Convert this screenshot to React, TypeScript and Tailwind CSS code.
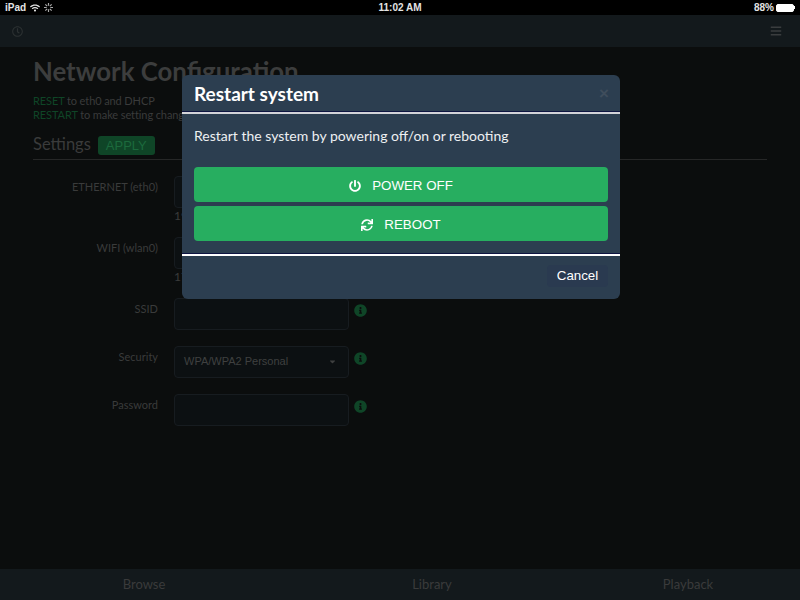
import { FaBars, FaInfoCircle, FaPowerOff, FaRegClock, FaSync, FaWifi, FaCaretDown } from 'react-icons/fa'

function FormRow({ label, caption, value }: { label: string; caption?: string; value?: string }) {
  return (
    <div className="flex items-start">
      <label className="w-[125px] pt-[3px] text-right text-[11px] leading-[16px] text-[#3a3b3b]">{label}</label>
      <div className="ml-4 w-[175px]">
        <div className="flex h-8 items-center justify-between rounded-[4px] border border-[#171c20] bg-[#0c1012] pb-[2px] pl-[9px] pr-[11px] font-['Liberation_Sans',sans-serif] text-[11px] text-[#3f4040]">
          {value}
          {value && <FaCaretDown className="text-[9px] text-[#3f4040]" />}
        </div>
        {caption && <p className="text-[12px] leading-[16px] text-[#3a3b3b]">{caption}</p>}
      </div>
      <FaInfoCircle className="ml-[5px] mt-[6px] text-[13px] text-[#0f4527]" />
    </div>
  )
}

function ActionButton({ icon, label }: { icon: React.ReactNode; label: string }) {
  return (
    <button className="flex h-[35px] w-full items-center justify-center gap-[11px] rounded-[4px] bg-[#27ae60] pt-[2px] font-['Liberation_Sans',sans-serif] text-[13.33px] text-white">
      {icon}
      {label}
    </button>
  )
}

export default function App() {
  return (
    <div className="relative flex h-[600px] w-[800px] flex-col overflow-hidden bg-[#0b0d0d] font-['Lato',sans-serif]">
      {/* Status bar */}
      <div className="flex h-[15px] items-center justify-between bg-black px-[5px] font-['Liberation_Sans',sans-serif] text-[10px] font-bold text-[#e4e4e4]">
        <div className="flex w-[200px] items-center gap-[4px]">
          <span>iPad</span>
          <FaWifi className="text-[10px]" />
          <svg width="9" height="9" viewBox="0 0 10 10" stroke="#aaa" strokeWidth="1.3">
            <path d="M5 0v3M5 7v3M0 5h3M7 5h3M1.5 1.5l2 2M6.5 6.5l2 2M8.5 1.5l-2 2M3.5 6.5l-2 2" />
          </svg>
        </div>
        <span>11:02 AM</span>
        <div className="flex w-[200px] items-center justify-end gap-[2px]">
          <span>88%</span>
          <div className="flex items-center">
            <div className="h-[8px] w-[18px] rounded-[2px] border border-white bg-white" />
            <div className="h-[3px] w-[1px] bg-white" />
          </div>
        </div>
      </div>

      {/* Navbar */}
      <div className="flex h-[32px] items-center justify-between bg-[#13191c] pl-[12px] pr-[18px]">
        <FaRegClock className="text-[11px] text-[#2c3132]" />
        <FaBars className="text-[12px] text-[#3a3d3e]" />
      </div>

      {/* Page */}
      <div className="flex-1 px-[33px] pt-[8px]">
        <h1 className="text-[25.8px] font-bold leading-[32px] text-[#3c3d3d]">Network Configuration</h1>
        <p className="mt-[7px] text-[11px] leading-[14px] tracking-[-0.1px] text-[#3a3b3b]">
          <span className="text-[#0f4527]">RESET</span> to eth0 and DHCP
          <br />
          <span className="text-[#0f4527]">RESTART</span> to make setting changes
        </p>
        <div className="mt-[10px] flex items-center gap-[7px] border-b border-[#262727] pb-[3px]">
          <span className="text-[16.5px] leading-[24px] text-[#3a3b3b]">Settings</span>
          <span className="mt-[2px] rounded-[3px] bg-[#0f4527] px-2 font-['Liberation_Sans',sans-serif] text-[13px] leading-[19px] text-[#1c6a3d]">APPLY</span>
        </div>
        <div className="mt-[16px] flex flex-col gap-4">
          <FormRow label="ETHERNET (eth0)" caption="192.168.1.10" />
          <div className="-mt-[3px]">
            <FormRow label="WIFI (wlan0)" caption="172.24.1.1" />
          </div>
          <div className="-mt-[3px]">
            <FormRow label="SSID" />
          </div>
          <FormRow label="Security" value="WPA/WPA2 Personal" />
          <FormRow label="Password" />
        </div>
      </div>

      {/* Bottom tabs */}
      <div className="flex h-[31px] items-center bg-[#13191c] text-[13px] text-[#3a3b3b]">
        <span className="w-[288px] text-center">Browse</span>
        <span className="w-[288px] text-center">Library</span>
        <span className="w-[224px] text-center">Playback</span>
      </div>

      {/* Modal */}
      <div className="absolute left-[182px] top-[75px] w-[438px] rounded-[6px] bg-[#2c3e50] text-white">
        <div className="flex h-[36px] items-center justify-between pl-3 pr-[11px]">
          <h2 className="pt-[2px] text-[19px] font-bold">Restart system</h2>
          <span className="font-['Liberation_Sans',sans-serif] text-[17px] font-bold leading-none text-[#3f4d5c]">×</span>
        </div>
        <div className="border-t border-[#0e1440] bg-[#d3d3d8] pt-[2px]" />
        <div className="px-3 pt-[12px]">
          <p className="text-[14px] leading-[20px] text-[#eef0f2]">Restart the system by powering off/on or rebooting</p>
          <div className="mt-[21px] flex flex-col gap-[4px]">
            <ActionButton icon={<FaPowerOff className="text-[12px]" />} label="POWER OFF" />
            <ActionButton icon={<FaSync className="text-[12px]" />} label="REBOOT" />
          </div>
        </div>
        <div className="mt-[12px] border-t border-[#0e1440] bg-white pt-[2px]" />
        <div className="flex justify-end px-3 pb-[12px] pt-[9px]">
          <button className="h-[22px] w-[61px] rounded-[4px] bg-[#2a3a50] font-['Liberation_Sans',sans-serif] text-[13.33px] text-white">Cancel</button>
        </div>
      </div>
    </div>
  )
}
